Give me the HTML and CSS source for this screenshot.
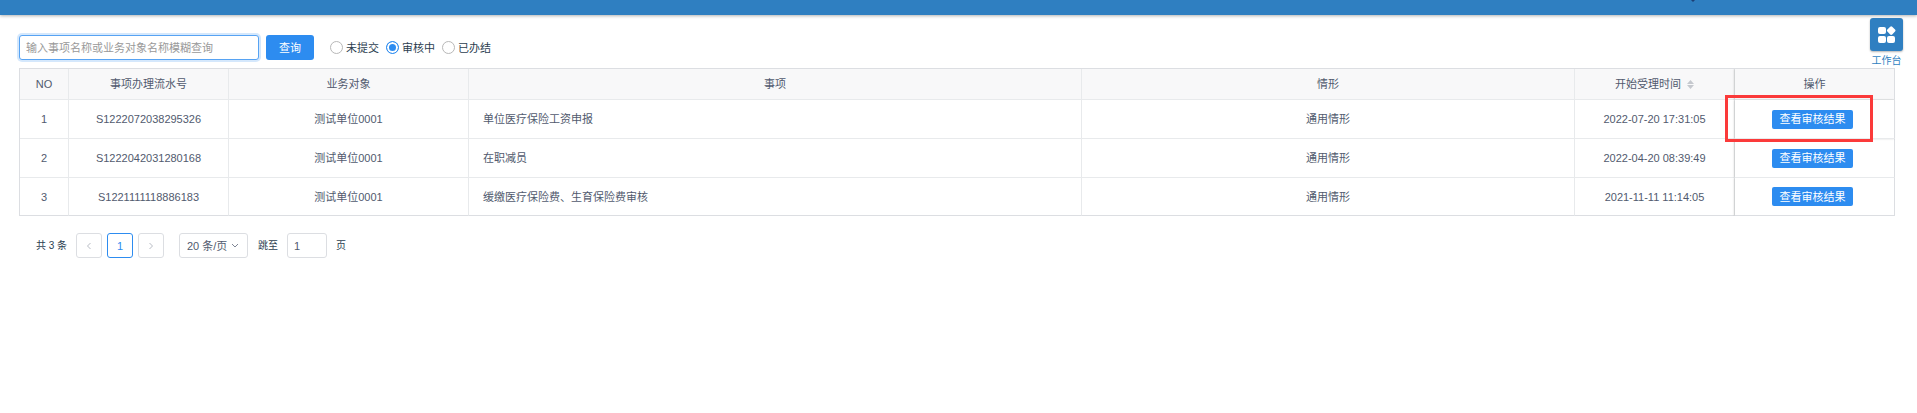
FILE: index.html
```html
<!DOCTYPE html>
<html lang="zh-CN">
<head>
    <meta charset="UTF-8">
    <meta name="viewport" content="width=device-width, initial-scale=1.0">
    <title>事项办理查询</title>
    <link rel="stylesheet" href="styles.css">
</head>
<body>
    <header class="topbar"><span class="topbar-caret"></span></header>

    <a class="workbench" href="#">
        <span class="workbench-icon">
            <svg width="18" height="18" viewBox="0 0 18 18" fill="#fff">
                <rect x="0" y="1" width="8" height="7" rx="2"/>
                <rect x="0" y="10" width="8" height="7" rx="2"/>
                <rect x="9" y="10" width="8" height="7" rx="2"/>
                <rect x="9.8" y="1.2" width="6.8" height="6.8" rx="1.4" transform="rotate(45 13.2 4.6)"/>
            </svg>
        </span>
        <span>工作台</span>
    </a>

    <main class="container">
        <form class="search">
            <input type="text" class="search-input" name="keyword" aria-label="关键字" placeholder="输入事项名称或业务对象名称模糊查询">
            <button type="button" class="btn">查询</button>
            <div class="radios">
                <label><input type="radio" name="status" value="0">未提交</label>
                <label><input type="radio" name="status" value="1" checked>审核中</label>
                <label><input type="radio" name="status" value="2">已办结</label>
            </div>
        </form>

        <table class="table">
            <colgroup>
                <col class="col-no">
                <col class="col-serial">
                <col class="col-object">
                <col class="col-item">
                <col>
                <col class="col-time">
                <col class="col-action">
            </colgroup>
            <thead>
                <tr>
                    <th>NO</th>
                    <th>事项办理流水号</th>
                    <th>业务对象</th>
                    <th>事项</th>
                    <th>情形</th>
                    <th>开始受理时间<svg class="sort" width="7" height="9" viewBox="0 0 7 9" fill="#c5c8ce"><path d="M0 4L3.5 0L7 4Z"/><path d="M0 5L3.5 9L7 5Z"/></svg></th>
                    <th class="fixed">操作</th>
                </tr>
            </thead>
            <tbody>
                <tr>
                    <td>1</td>
                    <td>S1222072038295326</td>
                    <td>测试单位0001</td>
                    <td class="left">单位医疗保险工资申报</td>
                    <td>通用情形</td>
                    <td>2022-07-20 17:31:05</td>
                    <td class="fixed"><button type="button" class="btn btn-small">查看审核结果</button><span class="mark"></span></td>
                </tr>
                <tr>
                    <td>2</td>
                    <td>S1222042031280168</td>
                    <td>测试单位0001</td>
                    <td class="left">在职减员</td>
                    <td>通用情形</td>
                    <td>2022-04-20 08:39:49</td>
                    <td class="fixed"><button type="button" class="btn btn-small">查看审核结果</button></td>
                </tr>
                <tr>
                    <td>3</td>
                    <td>S1221111118886183</td>
                    <td>测试单位0001</td>
                    <td class="left">缓缴医疗保险费、生育保险费审核</td>
                    <td>通用情形</td>
                    <td>2021-11-11 11:14:05</td>
                    <td class="fixed"><button type="button" class="btn btn-small">查看审核结果</button></td>
                </tr>
            </tbody>
        </table>

        <nav class="pager" aria-label="分页">
            <span class="pager-total">共 3 条</span>
            <div class="pager-pages">
                <button type="button" class="page" disabled aria-label="上一页"><svg width="6" height="8" viewBox="0 0 6 8"><path d="M4.5 1L1.5 4L4.5 7"/></svg></button>
                <button type="button" class="page active">1</button>
                <button type="button" class="page" disabled aria-label="下一页"><svg width="6" height="8" viewBox="0 0 6 8"><path d="M1.5 1L4.5 4L1.5 7"/></svg></button>
            </div>
            <div class="page-size">
                <select aria-label="每页条数">
                    <option>20 条/页</option>
                    <option>50 条/页</option>
                </select>
                <svg width="8" height="6" viewBox="0 0 8 6"><path d="M1 1L4 4L7 1"/></svg>
            </div>
            <div class="jump">
                <label for="jump">跳至</label>
                <input type="text" id="jump" value="1">
                <span>页</span>
            </div>
        </nav>
    </main>
</body>
</html>
```

FILE: styles.css
```css
* {
    box-sizing: border-box;
}

body {
    margin: 0;
    background: #fff;
    color: #515a6e;
    font-family: "Liberation Sans", "Noto Sans CJK SC", sans-serif;
    font-size: 11px;
    line-height: 16px;
}

button, input, select {
    font: inherit;
    margin: 0;
}

.topbar {
    position: relative;
    height: 15px;
    background: #2f7fc1;
    box-shadow: 0 1px 3px rgba(0, 0, 0, 0.3);
}

.topbar-caret {
    position: absolute;
    top: 0;
    right: 222px;
    border: 2px solid transparent;
    border-top-color: #1c3f75;
    border-bottom: 0;
}

/* floating shortcut, top right */
.workbench {
    position: absolute;
    top: 18px;
    right: 14px;
    display: flex;
    flex-direction: column;
    align-items: center;
    gap: 2px;
    color: #2f7fc1;
    font-size: 10px;
    text-decoration: none;
}

.workbench-icon {
    display: flex;
    align-items: center;
    justify-content: center;
    width: 33px;
    height: 33px;
    border-radius: 3px;
    background: #2f7fc1;
    box-shadow: 0 1px 2px rgba(0, 0, 0, 0.3);
}

.container {
    padding: 20px 22px 0 19px;
}

.search {
    display: flex;
    align-items: center;
    margin-bottom: 8px;
}

.search-input {
    width: 240px;
    height: 25px;
    margin-right: 7px;
    padding: 0 6px;
    border: 1px solid #57a3f3;
    border-radius: 3px;
    outline: none;
    box-shadow: 0 0 0 2px rgba(45, 140, 240, 0.2);
}

.search-input::placeholder {
    color: #999;
}

.btn {
    width: 48px;
    height: 25px;
    padding: 0;
    border: none;
    border-radius: 3px;
    background: #2d8cf0;
    color: #fff;
    cursor: pointer;
}

.radios {
    display: flex;
    gap: 7px;
    margin-left: 16px;
    color: #2c3e50;
}

.radios label {
    display: flex;
    align-items: center;
    gap: 3px;
}

.radios input {
    appearance: none;
    width: 13px;
    height: 13px;
    border: 1px solid #b8b8b8;
    border-radius: 50%;
    background: #fff;
}

.radios input:checked {
    border-color: #2d8cf0;
    background: #2d8cf0;
    box-shadow: inset 0 0 0 2px #fff;
}

.table {
    width: 100%;
    table-layout: fixed;
    border-collapse: separate;
    border-spacing: 0;
    border-top: 1px solid #dcdee2;
    border-left: 1px solid #dcdee2;
    text-align: center;
}

.col-no {
    width: 49px;
}

.col-serial, .col-time, .col-action {
    width: 160px;
}

.col-object {
    width: 240px;
}

.col-item {
    width: 613px;
}

.table th, .table td {
    height: 39px;
    padding: 0;
    border-right: 1px solid #e8eaec;
    border-bottom: 1px solid #e8eaec;
    font-weight: normal;
}

.table th {
    height: 31px;
    background: #f8f8f9;
}

.table tbody tr:last-child td {
    height: 38px;
    border-bottom-color: #dcdee2;
}

.table .left {
    padding-left: 14px;
    text-align: left;
}

.table .fixed {
    position: relative;
    border-right-color: #dcdee2;
    box-shadow: -1px 0 2px rgba(0, 0, 0, 0.15);
    clip-path: inset(0 0 0 -6px);
}

.table td.fixed {
    padding-right: 4px;
}

/* the framed cell must not clip its frame */
.table tbody tr:first-child .fixed {
    z-index: 1;
    clip-path: none;
}

.sort {
    margin-left: 6px;
    vertical-align: -1px;
}

.btn-small {
    display: block;
    width: 81px;
    height: 19px;
    margin: 0 auto;
    border-radius: 2px;
}

/* frame round the first action */
.mark {
    position: absolute;
    top: -5px;
    right: 21px;
    bottom: -4px;
    left: -10px;
    border: 3px solid #fb3a3a;
    pointer-events: none;
}

.pager {
    display: flex;
    align-items: center;
    margin: 17px 0 0 17px;
    color: #2c3e50;
    font-size: 10px;
}

.pager-total {
    width: 40px;
}

.pager-pages {
    display: flex;
    gap: 5px;
    margin-right: 15px;
}

.page, .page-size select, .jump input {
    height: 25px;
    padding: 0;
    border: 1px solid #dcdee2;
    border-radius: 3px;
    background: #fff;
    color: #515a6e;
    font-size: 11px;
}

.page {
    width: 26px;
}

.page.active {
    border-color: #2d8cf0;
    color: #2d8cf0;
}

.pager svg {
    fill: none;
    stroke: #b8bcc4;
}

.page-size {
    position: relative;
    margin-right: 10px;
}

.page-size select {
    appearance: none;
    width: 69px;
    padding-left: 7px;
}

.page-size svg {
    position: absolute;
    top: 10px;
    right: 9px;
    stroke: #808695;
}

.jump {
    display: flex;
    align-items: center;
    gap: 9px;
}

.jump input {
    width: 40px;
    padding: 0 6px;
}
```
